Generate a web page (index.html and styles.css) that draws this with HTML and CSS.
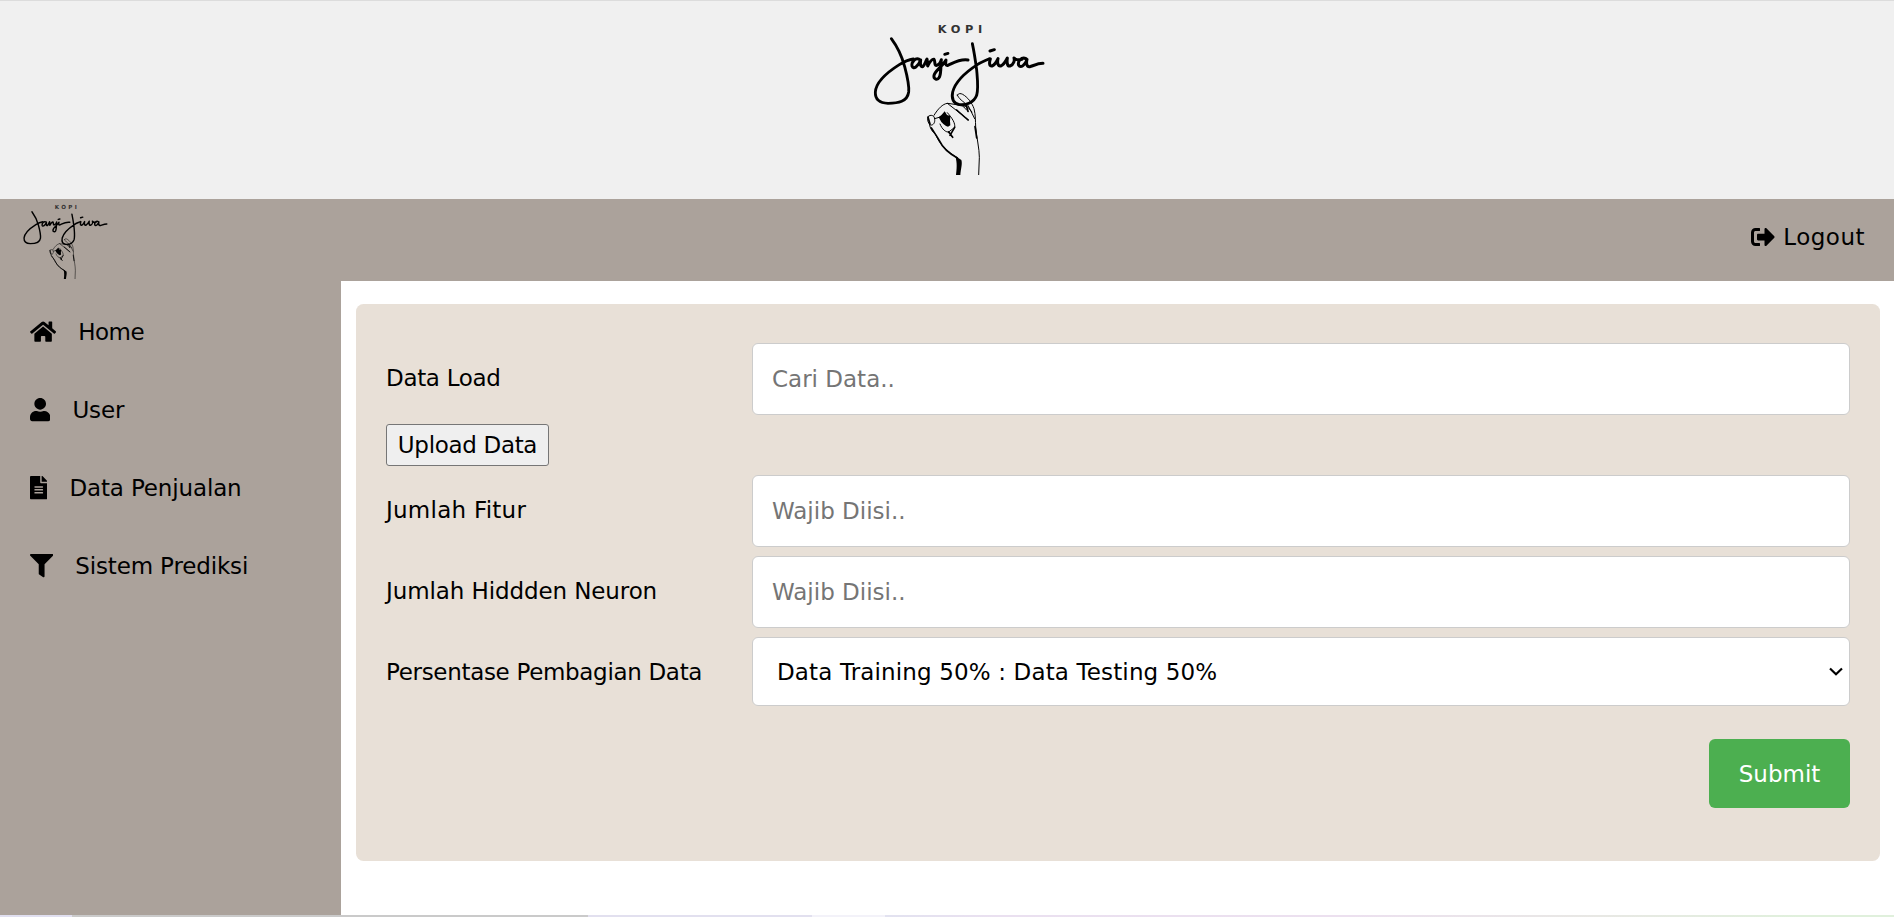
FILE: index.html
```html
<!DOCTYPE html>
<html lang="id">
<head>
<meta charset="utf-8">
<title>Sistem Prediksi</title>
<link rel="stylesheet" href="styles.css">
</head>
<body>
<header class="banner">
  <svg class="banner-logo" viewBox="30 33 530 462">
    <g id="logo">
      <text class="logo-word" x="233" y="70" textLength="134">KOPI</text>
      <g fill="none" stroke="#000" stroke-linecap="round" stroke-linejoin="round">
        <path stroke-width="8.500" d="M94 86C112 110 126 140 134 170C142 200 148 225 146 246C142 275 115 280 84 280C58 279 45 268 46 246C48 218 80 188 118 164C132 155 146 149 160 147"/>
        <path stroke-width="9" d="M178 148C166 142 154 156 156 168C160 180 174 170 182 150C180 162 182 172 188 170C194 166 196 156 201 147C203 156 202 164 203 168C208 158 216 147 222 148C226 152 222 168 230 166C238 164 242 156 244 149C242 166 244 190 238 202C232 212 220 208 222 196C226 180 246 172 258 150C256 160 256 168 264 166C278 160 298 146 324 150"/>
        <path stroke-width="8.500" d="M254 133L264 130M337 101C342 124 346 150 350 180C352 205 356 235 350 256C342 278 318 286 298 284C280 280 274 266 278 246C286 216 318 186 352 164C364 156 376 152 388 146"/>
        <path stroke-width="9" d="M390 123L403 119M391 147C387 158 388 170 396 168C406 164 410 154 414 146C411 158 414 170 422 168C432 164 438 152 442 144C440 158 442 170 450 168C462 164 464 150 462 144C468 152 478 150 486 148M498 146C484 140 472 154 476 166C482 176 496 164 501 148C498 160 500 172 510 170C522 166 534 160 549 160"/>
        <path stroke-width="3" d="M292 255C296 249 302 250 308 253C322 261 336 278 342 296C347 315 346 335 347 350C350 385 358 415 358 442L356 494M292 255C296 266 308 274 324 286L344 326M306 286C314 292 320 302 324 304M222 316C234 296 248 282 262 280C280 282 300 286 322 290L336 306M262 280L326 330M204 320C212 312 224 316 224 328C226 342 214 350 208 342C202 334 202 326 204 320M208 342C210 356 218 366 226 372C240 406 262 424 292 444M224 326L244 320M240 342C246 358 258 368 268 366L276 380M266 366L284 352C286 340 278 326 262 308"/>
        <path stroke-width="5" d="M214 354C224 370 232 380 238 392C250 418 270 432 292 444M204 322L210 342M266 366L278 382M270 376L284 352M290 300L324 330M318 284L324 304M345 350L350 384"/>
      </g>
      <path d="M236 322L245 314L254 304L261 315L271 318L270 334L271 346L264 350L258 348L250 342L244 336ZM286 438L304 450C308 462 302 478 301 495H288C290 476 292 460 286 438Z"/>
    </g>
  </svg>
</header>

<nav class="topbar">
  <svg class="topbar-logo" viewBox="30 33 530 462"><use href="#logo"/></svg>
  <a class="logout">
    <svg class="icon" viewBox="0 0 512 512"><path d="M497 273L329 441c-15 15-41 4.500-41-17v-96H152c-13.300 0-24-10.700-24-24v-96c0-13.300 10.700-24 24-24h136V88c0-21.400 25.900-32 41-17l168 168c9.300 9.400 9.300 24.600 0 34zM192 436v-40c0-6.600-5.400-12-12-12H96c-17.700 0-32-14.300-32-32V160c0-17.700 14.300-32 32-32h84c6.600 0 12-5.400 12-12V76c0-6.600-5.400-12-12-12H96c-53 0-96 43-96 96v192c0 53 43 96 96 96h84c6.600 0 12-5.400 12-12z"/></svg>
    <span>Logout</span>
  </a>
</nav>

<div class="layout">
  <aside class="sidebar">
    <a class="side-link home">
      <svg class="icon" viewBox="0 0 576 512"><path d="M280.370 148.260L96 300.110V464a16 16 0 0 0 16 16l112.060-.29a16 16 0 0 0 15.920-16V368a16 16 0 0 1 16-16h64a16 16 0 0 1 16 16v95.640a16 16 0 0 0 16 16.050L464 480a16 16 0 0 0 16-16V300L295.670 148.260a12.190 12.190 0 0 0-15.300 0zM571.600 251.470L488 182.560V44.050a12 12 0 0 0-12-12h-56a12 12 0 0 0-12 12v72.610L318.470 43a48 48 0 0 0-61 0L4.340 251.470a12 12 0 0 0-1.600 16.900l25.500 31A12 12 0 0 0 45.150 301l235.220-193.740a12.190 12.190 0 0 1 15.300 0L530.900 301a12 12 0 0 0 16.900-1.600l25.500-31a12 12 0 0 0-1.700-16.930z"/></svg>
      <span>Home</span>
    </a>
    <a class="side-link">
      <svg class="icon" viewBox="0 0 448 512"><path d="M224 256c70.700 0 128-57.300 128-128S294.700 0 224 0 96 57.300 96 128s57.300 128 128 128zm89.600 32h-16.700c-22.200 10.200-46.900 16-72.900 16s-50.600-5.800-72.900-16h-16.700C60.200 288 0 348.200 0 422.400V464c0 26.500 21.500 48 48 48h352c26.500 0 48-21.500 48-48v-41.600c0-74.200-60.200-134.400-134.400-134.400z"/></svg>
      <span>User</span>
    </a>
    <a class="side-link">
      <svg class="icon" viewBox="0 0 384 512"><path d="M224 136V0H24C10.700 0 0 10.700 0 24v464c0 13.300 10.700 24 24 24h336c13.300 0 24-10.700 24-24V160H248c-13.200 0-24-10.800-24-24zm64 236c0 6.600-5.400 12-12 12H108c-6.600 0-12-5.400-12-12v-8c0-6.600 5.400-12 12-12h168c6.600 0 12 5.400 12 12v8zm0-64c0 6.600-5.400 12-12 12H108c-6.600 0-12-5.400-12-12v-8c0-6.600 5.400-12 12-12h168c6.600 0 12 5.400 12 12v8zm0-72v8c0 6.600-5.400 12-12 12H108c-6.600 0-12-5.400-12-12v-8c0-6.600 5.400-12 12-12h168c6.600 0 12 5.400 12 12zm96-114.100v6.100H256V0h6.100c6.400 0 12.500 2.500 17 7l97.900 98c4.500 4.500 7 10.600 7 16.900z"/></svg>
      <span>Data Penjualan</span>
    </a>
    <a class="side-link">
      <svg class="icon" viewBox="0 0 512 512"><path d="M487.976 0H24.028C2.710 0-8.047 25.866 7.058 40.971L192 225.941V432c0 7.831 3.821 15.170 10.237 19.662l80 55.980C298.020 518.690 320 507.493 320 487.980V225.941l184.947-184.970C520.021 25.896 509.338 0 487.976 0z"/></svg>
      <span>Sistem Prediksi</span>
    </a>
  </aside>

  <main class="content">
    <form class="card">
      <div class="row">
        <label class="label tight" for="load">Data Load</label>
        <input class="field" id="load" type="text" placeholder="Cari Data..">
      </div>
      <button class="upload tight" type="button">Upload Data</button>
      <div class="row">
        <label class="label loose" for="fitur">Jumlah Fitur</label>
        <input class="field" id="fitur" type="text" placeholder="Wajib Diisi..">
      </div>
      <div class="row">
        <label class="label" for="neuron">Jumlah Hiddden Neuron</label>
        <input class="field" id="neuron" type="text" placeholder="Wajib Diisi..">
      </div>
      <div class="row">
        <label class="label tight" for="split">Persentase Pembagian Data</label>
        <div class="select" id="split">
          <span>Data Training 50% : Data Testing 50%</span>
          <svg class="chevron" viewBox="0 0 14 9"><path d="M1 1.500L7 7.200L13 1.500"/></svg>
        </div>
      </div>
      <button class="submit" type="button">Submit</button>
    </form>
  </main>
</div>
<footer class="strip"></footer>
</body>
</html>
```
FILE: styles.css
```css
* { box-sizing: border-box; }

body {
  margin: 0;
  height: 917px;
  display: flex;
  flex-direction: column;
  overflow: hidden;
  background: #fff;
  color: #000;
  font: 23px/30px "DejaVu Sans", Verdana, sans-serif;
}

.logo-word { font: bold 34px "DejaVu Sans", sans-serif; fill: #333; }
.icon { height: 23.300px; flex: none; }

.banner {
  flex: none;
  height: 199px;
  padding: 20px 0 0 870px;
  border-top: 1px solid #dcdcdc;
  background: #f0f0f0;
}
.banner-logo { display: block; width: 176.700px; height: 154px; }

.topbar {
  flex: none;
  height: 82px;
  padding: 4px 29px 0 21px;
  display: flex;
  justify-content: space-between;
  align-items: flex-start;
  background: #aba29b;
}
.topbar-logo { width: 88px; height: 76px; }
.logout { display: flex; gap: 8px; align-items: center; padding-top: 19px; letter-spacing: 0.500px; }
.logout .icon { height: 24px; }

.layout { flex: 1; display: flex; min-height: 0; }
.sidebar { width: 341px; padding: 12px 0 0 30px; background: #aba29b; }
.side-link { display: flex; align-items: center; gap: 22px; height: 78px; letter-spacing: -0.150px; }
.side-link.home { letter-spacing: -0.500px; }

.content { flex: 1; padding: 23px 14px 0 15px; }
.card {
  display: flex;
  flex-direction: column;
  gap: 9px;
  height: 557px;
  padding: 39px 30px 0;
  border-radius: 7.500px;
  background: #e8e0d7;
}
.row { display: flex; }
.label { width: 366px; padding-top: 20px; letter-spacing: -0.100px; }
.tight { letter-spacing: -0.320px; }
.loose { letter-spacing: 0.250px; }
.field, .select {
  flex: 1;
  height: 72px;
  padding: 0 19px;
  border: 1px solid #ccc;
  border-radius: 6px;
  background: #fff;
  font: inherit;
}
.field::placeholder { color: #757575; }
.select {
  display: flex;
  align-items: center;
  justify-content: space-between;
  height: 69px;
  padding: 0 6px 0 24px;
  letter-spacing: 0.140px;
}
.chevron { width: 14px; height: 9px; fill: none; stroke: #000; stroke-width: 2.200; }
.upload {
  align-self: flex-start;
  width: 163px;
  height: 42px;
  padding: 0;
  border: 1px solid #767676;
  border-radius: 3px;
  background: #efefef;
  color: #000;
  font: inherit;
}
.submit {
  align-self: flex-end;
  width: 141px;
  height: 69px;
  margin-top: 24px;
  padding: 0;
  border: 0;
  border-radius: 6px;
  background: #4caf50;
  color: #fff;
  font: inherit;
}

.strip {
  flex: none;
  height: 2px;
  background: linear-gradient(90deg, #e0dff0 72px, #cacaca 72px 588px, #e2e0ef 588px 812px, #f3f2f9 812px 885px, #e2e2f0 885px, #eae0f0 1000px, #ece0ef 1350px, #e8e8e4 1600px, #e0f0dc 1800px);
}
```
